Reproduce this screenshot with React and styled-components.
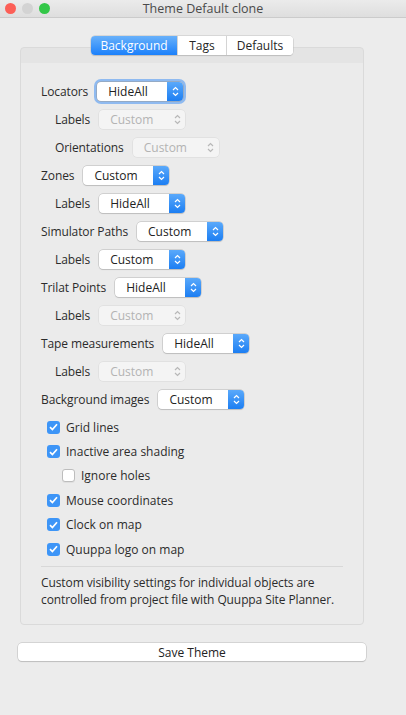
import React from "react";
import styled, { createGlobalStyle } from "styled-components";

const GlobalStyle = createGlobalStyle`
  html, body {
    margin: 0;
    padding: 0;
    background: #ececec;
    font-family: "Open Sans", "DejaVu Sans", sans-serif;
    color: #2b2b2b;
  }
`;

const Window = styled.div`
  width: 406px;
  height: 715px;
  background: #ececec;
  overflow: hidden;
`;

const TitleBar = styled.div`
  position: relative;
  height: 17px;
  display: flex;
  align-items: center;
  justify-content: center;
  background: linear-gradient(#ebebeb, #dedede);
  border-bottom: 1px solid #cbcbcb;
`;

const Lights = styled.div`
  position: absolute;
  left: 5px;
  top: 3px;
  display: flex;
  gap: 6px;
`;

const Light = styled.span`
  width: 11px;
  height: 11px;
  border-radius: 50%;
  background: ${(p) => p.color};
`;

const Title = styled.div`
  font-size: 12.5px;
  color: #4a4a4a;
`;

const Body = styled.div`
  padding-top: 18px;
`;

const TabsRow = styled.div`
  position: relative;
  z-index: 1;
  display: flex;
  justify-content: flex-start;
  padding-left: 91px;
  margin-bottom: -8px;
`;

const Tabs = styled.div`
  display: flex;
  height: 19px;
  border-radius: 4px;
  background: #fff;
  box-shadow: 0 0 0 0.5px #c2c2c2, 0 1px 1px rgba(0, 0, 0, 0.18);
  overflow: hidden;
`;

const Tab = styled.div`
  width: ${(p) => p.w}px;
  display: flex;
  align-items: center;
  justify-content: center;
  font-size: 12px;
  color: ${(p) => (p.active ? "#fff" : "#262626")};
  background: ${(p) => (p.active ? "linear-gradient(#69b1fa, #1b80fb)" : "#fff")};
  border-left: ${(p) => (p.first ? "none" : "1px solid #d4d4d4")};
`;

const Panel = styled.div`
  margin: 0 42px 0 20px;
  border: 1px solid #dadada;
  border-radius: 4px;
  background: linear-gradient(#e4e4e4 0, #e4e4e4 15px, #ebebeb 15px);
  padding: 29px 20px 16px;
`;

const FormRow = styled.div`
  height: 28px;
  display: flex;
  align-items: center;
  gap: 9px;
  padding-left: ${(p) => (p.indent ? 14 : 0)}px;
`;

const Label = styled.span`
  font-size: 12px;
  letter-spacing: -0.1px;
  color: #2b2b2b;
  white-space: nowrap;
`;

const SelectBox = styled.div`
  width: 86px;
  height: 19px;
  box-sizing: border-box;
  display: flex;
  align-items: center;
  border-radius: 4px;
  background: ${(p) => (p.disabled ? "#f4f4f4" : "#fff")};
  box-shadow: ${(p) =>
    p.focused
      ? "0 0 0 0.5px #9a9a9a, 0 0 0 3px #8fbaf0"
      : p.disabled
      ? "0 0 0 0.5px #d8d8d8"
      : "0 0 0 0.5px #b5b5b5, 0 1px 1px rgba(0,0,0,0.15)"};
  overflow: hidden;
`;

const SelectText = styled.span`
  flex: 1;
  padding-left: 11px;
  font-size: 12px;
  color: ${(p) => (p.disabled ? "#b3b3b3" : "#222")};
`;

const Stepper = styled.span`
  width: 16px;
  height: 100%;
  display: flex;
  align-items: center;
  justify-content: center;
  background: ${(p) => (p.disabled ? "transparent" : "linear-gradient(#5aa9fb, #1c7ef2)")};
`;

const Checks = styled.div`
  margin-top: 2px;
`;

const CheckRow = styled.label`
  height: 24.4px;
  display: flex;
  align-items: center;
  gap: 6px;
  padding-left: ${(p) => (p.indent ? 21 : 6)}px;
  font-size: 12px;
  color: #2b2b2b;
`;

const Box = styled.span`
  width: 13px;
  height: 13px;
  box-sizing: border-box;
  border-radius: 3px;
  display: flex;
  align-items: center;
  justify-content: center;
  background: ${(p) => (p.checked ? "#3d95f7" : "#fff")};
  border: ${(p) => (p.checked ? "none" : "1px solid #bdbdbd")};
  box-shadow: ${(p) => (p.checked ? "none" : "0 1px 0 rgba(0,0,0,0.05)")};
`;

const Separator = styled.div`
  height: 1px;
  background: #d8d8d8;
  margin-top: 5px;
`;

const Note = styled.p`
  margin: 8px 0 0;
  font-size: 12px;
  line-height: 16.5px;
  color: #2b2b2b;
  white-space: nowrap;
  letter-spacing: -0.1px;
`;

const SaveButton = styled.div`
  margin: 18px 40px 0 18px;
  height: 18px;
  border-radius: 4px;
  background: #fff;
  box-shadow: 0 0 0 0.5px #bcbcbc, 0 1px 1px rgba(0, 0, 0, 0.18);
  display: flex;
  align-items: center;
  justify-content: center;
  font-size: 12px;
  color: #222;
`;

function Chevrons({ disabled }) {
  const c = disabled ? "#b8b8b8" : "#fff";
  return (
    <svg width="7" height="11" viewBox="0 0 7 11">
      <path d="M1 4 L3.5 1.5 L6 4" fill="none" stroke={c} strokeWidth="1.2" />
      <path d="M1 7 L3.5 9.5 L6 7" fill="none" stroke={c} strokeWidth="1.2" />
    </svg>
  );
}

function Select({ value, disabled, focused }) {
  return (
    <SelectBox disabled={disabled} focused={focused}>
      <SelectText disabled={disabled}>{value}</SelectText>
      <Stepper disabled={disabled}>
        <Chevrons disabled={disabled} />
      </Stepper>
    </SelectBox>
  );
}

function Check({ label, checked, indent }) {
  return (
    <CheckRow indent={indent}>
      <Box checked={checked}>
        {checked && (
          <svg width="9" height="8" viewBox="0 0 9 8">
            <path d="M1 4.2 L3.4 6.5 L8 1.2" fill="none" stroke="#fff" strokeWidth="1.7" />
          </svg>
        )}
      </Box>
      {label}
    </CheckRow>
  );
}

const rows = [
  { label: "Locators", value: "HideAll", focused: true },
  { label: "Labels", value: "Custom", indent: true, disabled: true },
  { label: "Orientations", value: "Custom", indent: true, disabled: true },
  { label: "Zones", value: "Custom" },
  { label: "Labels", value: "HideAll", indent: true },
  { label: "Simulator Paths", value: "Custom" },
  { label: "Labels", value: "Custom", indent: true },
  { label: "Trilat Points", value: "HideAll" },
  { label: "Labels", value: "Custom", indent: true, disabled: true },
  { label: "Tape measurements", value: "HideAll" },
  { label: "Labels", value: "Custom", indent: true, disabled: true },
  { label: "Background images", value: "Custom" },
];

const checks = [
  { label: "Grid lines", checked: true },
  { label: "Inactive area shading", checked: true },
  { label: "Ignore holes", checked: false, indent: true },
  { label: "Mouse coordinates", checked: true },
  { label: "Clock on map", checked: true },
  { label: "Quuppa logo on map", checked: true },
];

export default function App() {
  return (
    <Window>
      <GlobalStyle />
      <TitleBar>
        <Lights>
          <Light color="#fc5f57" />
          <Light color="#d3d3d3" />
          <Light color="#33c748" />
        </Lights>
        <Title>Theme Default clone</Title>
      </TitleBar>
      <Body>
        <TabsRow>
          <Tabs>
            <Tab w={86} active first>Background</Tab>
            <Tab w={48}>Tags</Tab>
            <Tab w={66}>Defaults</Tab>
          </Tabs>
        </TabsRow>
        <Panel>
          {rows.map((r, i) => (
            <FormRow key={i} indent={r.indent}>
              <Label>{r.label}</Label>
              <Select value={r.value} disabled={r.disabled} focused={r.focused} />
            </FormRow>
          ))}
          <Checks>
            {checks.map((c, i) => (
              <Check key={i} {...c} />
            ))}
          </Checks>
          <Separator />
          <Note>
            Custom visibility settings for individual objects are
            <br />
            controlled from project file with Quuppa Site Planner.
          </Note>
        </Panel>
        <SaveButton>Save Theme</SaveButton>
      </Body>
    </Window>
  );
}
